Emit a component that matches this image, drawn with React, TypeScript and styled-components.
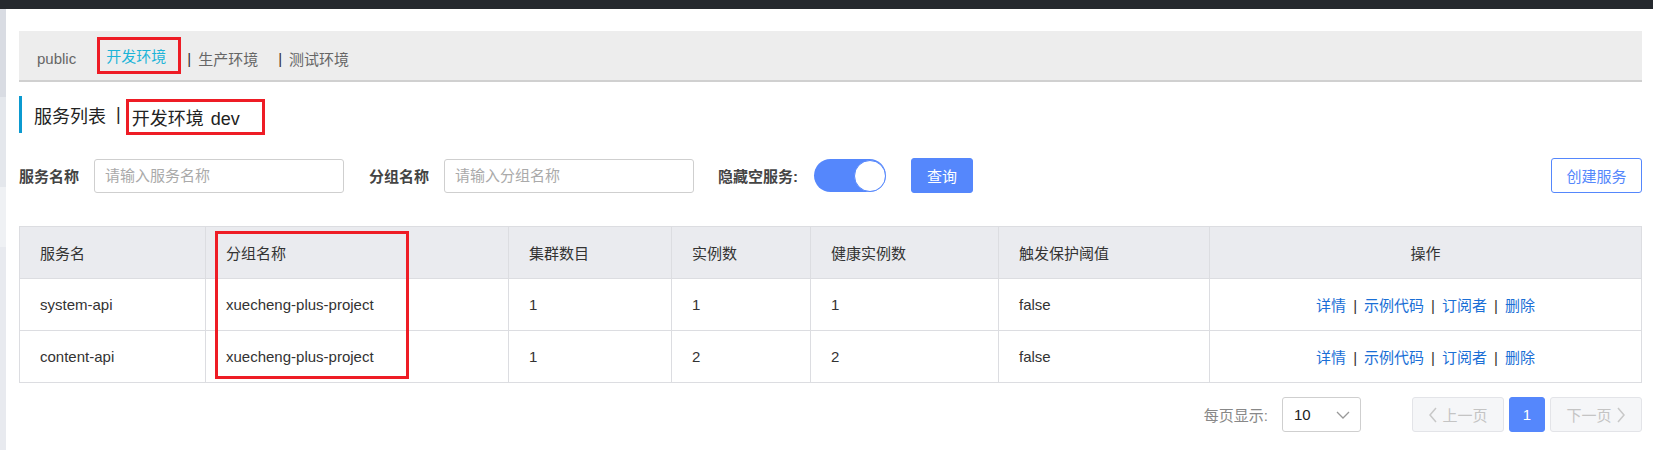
import React from "react";
import styled, { createGlobalStyle } from "styled-components";

const Global = createGlobalStyle`
  html, body { margin: 0; padding: 0; background: #fff; }
  body { font-family: "Liberation Sans", "Noto Sans CJK SC", sans-serif; color: #333; }
  * { box-sizing: border-box; }
`;

const Page = styled.div`
  width: 1653px;
  height: 450px;
  overflow: hidden;
  display: flex;
  flex-direction: column;
`;

const TopBar = styled.div`
  height: 9px;
  background: #25292e;
  flex: none;
`;

const Body = styled.div`
  flex: 1;
  display: flex;
`;

const Sidebar = styled.div`
  width: 7px;
  display: flex;
  flex-direction: column;
`;

const SideSeg = styled.div<{ $h?: number; $c: string }>`
  height: ${(p) => (p.$h ? `${p.$h}px` : "auto")};
  flex: ${(p) => (p.$h ? "none" : "1")};
  background: ${(p) => p.$c};
`;

const Main = styled.div`
  flex: 1;
  padding: 22px 11px 0 13px;
  display: flex;
  flex-direction: column;
`;

const TabBar = styled.div`
  height: 51px;
  background: #ededed;
  border-bottom: 2px solid #d0d0d0;
  display: flex;
  align-items: center;
  padding: 6px 0 0 18px;
  font-size: 15px;
`;

const Tab = styled.span<{ $gap?: number }>`
  color: #666;
  margin-left: ${(p) => p.$gap ?? 0}px;
`;

const ActiveTab = styled.span`
  margin-left: 21px;
  margin-top: -6px;
  height: 37px;
  display: inline-flex;
  align-items: center;
  padding: 0 12px 0 6px;
  border: 3px solid #ee1c25;
  color: #1cb4d8;
`;

const TabSep = styled.span<{ $gap: number }>`
  color: #333;
  margin: 0 7px 0 ${(p) => p.$gap}px;
`;

const TitleRow = styled.div`
  margin-top: 14px;
  height: 37px;
  display: flex;
  align-items: center;
  border-left: 3px solid #0b9ad0;
  padding-left: 12px;
  font-size: 18px;
  color: #222;
`;

const TitleSep = styled.span`
  margin: 0 5px 0 10px;
`;

const TitleBox = styled.span`
  width: 139px;
  height: 36px;
  display: inline-flex;
  align-items: center;
  padding-left: 3px;
  border: 3px solid #ee1c25;
  margin-top: 4px;
  word-spacing: 2px;
`;

const SearchRow = styled.div`
  margin-top: 25px;
  height: 35px;
  display: flex;
  align-items: center;
`;

const Label = styled.span<{ $gap?: number; $after?: number }>`
  font-size: 15px;
  font-weight: bold;
  color: #444;
  margin-left: ${(p) => p.$gap ?? 0}px;
  margin-right: ${(p) => p.$after ?? 15}px;
`;

const Input = styled.input`
  width: 250px;
  height: 34px;
  border: 1px solid #cfcfcf;
  border-radius: 3px;
  padding: 0 10px;
  font-family: inherit;
  font-size: 15px;
  color: #333;
  outline: none;
  &::placeholder { color: #aaa; }
`;

const Toggle = styled.div`
  width: 72px;
  height: 33px;
  border-radius: 17px;
  background: #5587fc;
  display: flex;
  justify-content: flex-end;
  align-items: center;
  margin-left: 16px;
`;

const Knob = styled.div`
  width: 32px;
  height: 32px;
  border-radius: 50%;
  background: #fff;
  border: 1px solid #5587fc;
`;

const Button = styled.button<{ $primary?: boolean }>`
  height: 35px;
  padding: 0;
  border-radius: 3px;
  border: 1px solid #5587fc;
  background: ${(p) => (p.$primary ? "#5587fc" : "#fff")};
  color: ${(p) => (p.$primary ? "#fff" : "#5587fc")};
  font-family: inherit;
  font-size: 15px;
`;

const QueryButton = styled(Button)`
  margin-left: 25px;
  width: 62px;
`;

const CreateButton = styled(Button)`
  margin-left: auto;
  width: 91px;
`;

const TableWrap = styled.div`
  margin-top: 33px;
  position: relative;
`;

const Table = styled.table`
  width: 100%;
  border-collapse: collapse;
  table-layout: fixed;
  font-size: 15px;
`;

const Th = styled.th<{ $center?: boolean }>`
  height: 52px;
  background: #eaebef;
  border: 1px solid #dcdde1;
  font-weight: normal;
  color: #333;
  text-align: ${(p) => (p.$center ? "center" : "left")};
  padding: 0 0 0 ${(p) => (p.$center ? 0 : 20)}px;
`;

const Td = styled.td<{ $center?: boolean }>`
  height: 52px;
  border: 1px solid #dcdde1;
  color: #333;
  text-align: ${(p) => (p.$center ? "center" : "left")};
  padding: 0 0 0 ${(p) => (p.$center ? 0 : 20)}px;
`;

const Link = styled.a`
  color: #1a6fd6;
  text-decoration: none;
`;

const LinkSep = styled.span`
  color: #333;
  margin: 0 7px;
`;

const Highlight = styled.div`
  position: absolute;
  left: 196px;
  top: 5px;
  width: 194px;
  height: 148px;
  border: 3px solid #ee1c25;
  pointer-events: none;
`;

const Pager = styled.div`
  margin-top: 14px;
  height: 35px;
  display: flex;
  align-items: center;
  justify-content: flex-end;
  font-size: 15px;
`;

const PagerLabel = styled.span`
  color: #888;
  margin-right: 14px;
`;

const Select = styled.div`
  width: 79px;
  height: 35px;
  border: 1px solid #cfcfcf;
  border-radius: 3px;
  display: flex;
  align-items: center;
  justify-content: space-between;
  padding: 0 10px 0 11px;
  color: #222;
  margin-right: 51px;
`;

const PageBtn = styled.div<{ $active?: boolean; $w: number }>`
  width: ${(p) => p.$w}px;
  height: 35px;
  border-radius: 3px;
  display: flex;
  align-items: center;
  justify-content: center;
  gap: 4px;
  background: ${(p) => (p.$active ? "#5587fc" : "#f5f6f8")};
  border: 1px solid ${(p) => (p.$active ? "#5587fc" : "#e3e4e8")};
  color: ${(p) => (p.$active ? "#fff" : "#c4c4c4")};
  & + & { margin-left: 5px; }
`;

const Chevron = ({ dir, color }: { dir: "down" | "left" | "right"; color: string }) => {
  if (dir === "down")
    return (
      <svg width={14} height={8} viewBox="0 0 14 8">
        <polyline points="1,1 7,7 13,1" fill="none" stroke={color} strokeWidth="1.3" />
      </svg>
    );
  const pts = dir === "left" ? "8,1 2,8 8,15" : "2,1 8,8 2,15";
  return (
    <svg width="10" height="16" viewBox="0 0 10 16">
      <polyline points={pts} fill="none" stroke={color} strokeWidth="1.5" />
    </svg>
  );
};

const rows = [
  { name: "system-api", group: "xuecheng-plus-project", cluster: 1, inst: 1, healthy: 1, thr: "false" },
  { name: "content-api", group: "xuecheng-plus-project", cluster: 1, inst: 2, healthy: 2, thr: "false" },
];

const widths = [186, 303, 163, 139, 188, 211, 432];

export default function App() {
  return (
    <Page>
      <Global />
      <TopBar />
      <Body>
        <Sidebar>
          <SideSeg $h={88} $c="#d9dce3" />
          <SideSeg $h={90} $c="#e4e7ec" />
          <SideSeg $h={60} $c="#eff1f4" />
          <SideSeg $c="#e8eaef" />
        </Sidebar>
        <Main>
          <TabBar>
            <Tab>public</Tab>
            <ActiveTab>开发环境</ActiveTab>
            <TabSep $gap={6}>|</TabSep>
            <Tab>生产环境</Tab>
            <TabSep $gap={20}>|</TabSep>
            <Tab>测试环境</Tab>
          </TabBar>

          <TitleRow>
            <span>服务列表</span>
            <TitleSep>|</TitleSep>
            <TitleBox>开发环境 dev</TitleBox>
          </TitleRow>

          <SearchRow>
            <Label>服务名称</Label>
            <Input placeholder="请输入服务名称" />
            <Label $gap={25}>分组名称</Label>
            <Input placeholder="请输入分组名称" />
            <Label $gap={24} $after={0}>隐藏空服务:</Label>
            <Toggle>
              <Knob />
            </Toggle>
            <QueryButton $primary>查询</QueryButton>
            <CreateButton>创建服务</CreateButton>
          </SearchRow>

          <TableWrap>
            <Table>
              <colgroup>
                {widths.map((w, i) => (
                  <col key={i} style={{ width: w }} />
                ))}
              </colgroup>
              <thead>
                <tr>
                  <Th>服务名</Th>
                  <Th>分组名称</Th>
                  <Th>集群数目</Th>
                  <Th>实例数</Th>
                  <Th>健康实例数</Th>
                  <Th>触发保护阈值</Th>
                  <Th $center>操作</Th>
                </tr>
              </thead>
              <tbody>
                {rows.map((r) => (
                  <tr key={r.name}>
                    <Td>{r.name}</Td>
                    <Td>{r.group}</Td>
                    <Td>{r.cluster}</Td>
                    <Td>{r.inst}</Td>
                    <Td>{r.healthy}</Td>
                    <Td>{r.thr}</Td>
                    <Td $center>
                      <Link>详情</Link>
                      <LinkSep>|</LinkSep>
                      <Link>示例代码</Link>
                      <LinkSep>|</LinkSep>
                      <Link>订阅者</Link>
                      <LinkSep>|</LinkSep>
                      <Link>删除</Link>
                    </Td>
                  </tr>
                ))}
              </tbody>
            </Table>
            <Highlight />
          </TableWrap>

          <Pager>
            <PagerLabel>每页显示:</PagerLabel>
            <Select>
              <span>10</span>
              <Chevron dir="down" color="#999" />
            </Select>
            <PageBtn $w={92}>
              <Chevron dir="left" color="#c8c8c8" />
              <span>上一页</span>
            </PageBtn>
            <PageBtn $w={36} $active>1</PageBtn>
            <PageBtn $w={92}>
              <span>下一页</span>
              <Chevron dir="right" color="#c8c8c8" />
            </PageBtn>
          </Pager>
        </Main>
      </Body>
    </Page>
  );
}
